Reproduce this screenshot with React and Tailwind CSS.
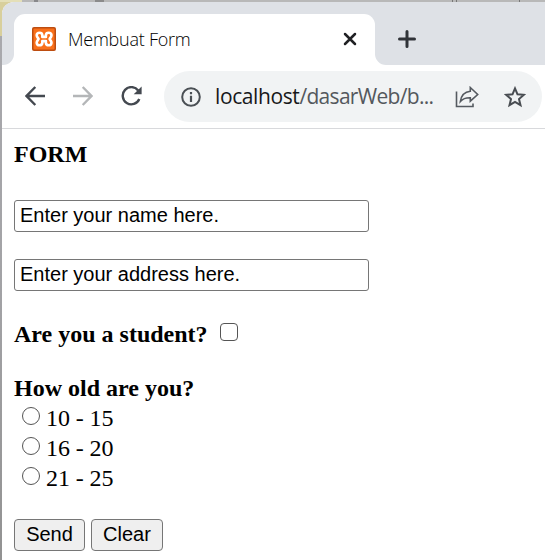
import React from "react";

function XamppLogo() {
  return (
    <svg width="24" height="24" viewBox="0 0 24 24" className="shrink-0">
      <rect width="24" height="24" rx="2" fill="#bd4d10" />
      <rect x="1.5" y="1.5" width="21" height="21" rx="1" fill="#f9701a" />
      <path
        d="M10.3 8C10 5 5 4.9 4.7 8.2C4.7 10 6 10.8 6.6 12C6 13.2 4.7 14 4.7 15.8C5 19.1 10 19 10.3 16V14.1H13.9V16C14.2 19 19.2 19.1 19.5 15.8C19.5 14 18.2 13.2 17.6 12C18.2 10.8 19.5 10 19.5 8.2C19.2 4.9 14.2 5 13.9 8V9.9H10.3Z"
        fill="#f9701a"
        stroke="#fff"
        strokeWidth="2.6"
        strokeLinejoin="round"
      />
    </svg>
  );
}

function TabStrip() {
  return (
    <div className="flex h-[63px] shrink-0 items-end bg-[#dee1e6]">
      <div className="h-[51px] w-3 bg-white">
        <div className="h-full w-full rounded-br-[11px] bg-[#dee1e6]" />
      </div>
      <div className="flex h-[51px] w-[361px] items-center rounded-t-[11px] bg-white pb-px pl-[18px] pr-[18px]">
        <XamppLogo />
        <span className="ml-[12px] flex-1 whitespace-nowrap font-['Open_Sans','Noto_Sans',sans-serif] text-[18px] font-light tracking-[-0.24px] text-black">
          Membuat Form
        </span>
        <svg width="14" height="14" viewBox="0 0 14 14" stroke="#202124" strokeWidth="2.5" strokeLinecap="round">
          <path d="M2 2L12 12M12 2L2 12" />
        </svg>
      </div>
      <div className="h-[51px] flex-1 bg-white">
        <div className="flex h-full w-full items-center rounded-bl-[11px] bg-[#dee1e6] pb-[2px] pl-[23px]">
          <svg width="18" height="18" viewBox="0 0 18 18" stroke="#303338" strokeWidth="3" strokeLinecap="round">
            <path d="M1.5 9H16.5M9 1.5V16.5" />
          </svg>
        </div>
      </div>
    </div>
  );
}

function Toolbar() {
  return (
    <div className="flex h-[64px] shrink-0 items-center border-b border-[#d8d9dc] bg-white pl-[23px] pr-[3px]">
      <svg className="relative -top-px" width="20" height="20" viewBox="0 0 20 20" fill="none" stroke="#444950" strokeWidth="2.4">
        <path d="M20 10H2M10.3 1L1.5 10L10.3 19" />
      </svg>
      <svg className="relative -top-px ml-7" width="20" height="20" viewBox="0 0 20 20" fill="none" stroke="#b4b6b8" strokeWidth="2.4">
        <path d="M0 10H18M9.7 1L18.5 10L9.7 19" />
      </svg>
      <svg className="relative -top-px ml-[28px]" width="21" height="20" viewBox="0 0 21 20" fill="none">
        <path d="M17.2 4.5A8.6 8.6 0 1 0 18.3 13" stroke="#444950" strokeWidth="2.4" />
        <path d="M20.6 .4V8.3H12.7Z" fill="#444950" />
      </svg>
      <div className="ml-[22px] flex h-[51px] flex-1 items-center rounded-full bg-[#f1f3f4] pl-[17px] pr-[16px]">
        <svg width="20" height="20" viewBox="0 0 20 20" fill="none" stroke="#4b5055" strokeWidth="2">
          <circle cx="10" cy="10" r="8.8" />
          <path d="M10 8.8V15M10 5V7.2" strokeWidth="2.2" />
        </svg>
        <span className="ml-[14px] w-[220px] whitespace-nowrap pt-px font-['Open_Sans','Noto_Sans',sans-serif] text-[21px] tracking-[-0.68px] text-[#54585d]">
          <span className="tracking-[-0.4px] text-[#17181a]">localhost</span>/dasarWeb/b...
        </span>
        <svg className="ml-[20px] shrink-0" width="24" height="22" viewBox="0 0 24 22" fill="none" stroke="#555a60" strokeWidth="1.6">
          <path d="M1.5 5.5V20.5H18V17.5" />
          <path d="M15.3 1.5L22.7 8.5L15.3 15.2V11.7C11 11.6 8 12.4 5.4 15.4C6.2 9.5 9.5 5.8 15.3 5.2Z" />
        </svg>
        <svg className="ml-auto shrink-0" width="22" height="22" viewBox="0 0 22 22" fill="none" stroke="#494d52" strokeWidth="2">
          <path d="M11 2.4L13.5 8.3L19.9 8.8L15 13L16.5 19.2L11 15.9L5.5 19.2L7 13L2.1 8.8L8.5 8.3Z" />
        </svg>
      </div>
    </div>
  );
}

const ages = ["10 - 15", "16 - 20", "21 - 25"];
const fieldClass =
  "block h-8 w-[355px] rounded-[3px] border border-[#767676] bg-white px-[5px] pb-[2px] font-['Liberation_Sans',Arial,sans-serif] text-[20px] text-black outline-none";
const buttonClass =
  "h-8 rounded-[4px] border border-[#767676] bg-[#efefef] pb-[2px] text-center font-['Liberation_Sans',Arial,sans-serif] text-[20px] leading-none text-black";

export default function App() {
  return (
    <div className="flex h-[560px] w-[545px] flex-col overflow-hidden bg-[#a2a2a5]">
      <div className="flex h-[2px] shrink-0 bg-[#b8b8b8]">
        <div className="w-[22px] bg-[#e4dfb8]" />
        <div className="ml-[12px] w-[4px] bg-[#88888b]" />
        <div className="ml-[57px] w-[9px] bg-[#8b8b8b]" />
        <div className="ml-[348px] w-px bg-[#777]" />
        <div className="ml-[3px] w-px bg-[#777]" />
        <div className="ml-[62px] w-px bg-[#777]" />
      </div>
      <div className="flex flex-1 bg-[linear-gradient(to_bottom,#d8cf9c_0px,#d8cf9c_34px,#a9a9ad_34px,#a2a2a5_300px,#929292_100%)]">
        <div className="ml-[2px] flex flex-1 flex-col overflow-hidden rounded-tl-[12px] bg-white">
          <TabStrip />
          <Toolbar />
          <form className="pl-[12px] pt-[10px] font-['Liberation_Serif','Times_New_Roman',serif] text-[24px] leading-[30px] text-black">
            <h1 className="font-bold">FORM</h1>
            <input className={`mt-[31px] ${fieldClass}`} defaultValue="Enter your name here." />
            <input className={`mt-[27px] ${fieldClass}`} defaultValue="Enter your address here." />
            <div className="mt-[28px] flex h-[30px] font-bold">
              <span>Are you a student?</span>
              <input
                type="checkbox"
                className="ml-[12px] mt-[4px] size-[18px] appearance-none rounded-[4px] border border-[#555] bg-white"
              />
            </div>
            <div className="mt-[24px] font-bold">How old are you?</div>
            {ages.map((age) => (
              <label key={age} className="flex h-[30px] pl-2">
                <input
                  type="radio"
                  name="age"
                  className="mt-[4px] size-[18px] appearance-none rounded-full border border-[#555] bg-white"
                />
                <span className="ml-[6px] tracking-[-0.1px]">{age}</span>
              </label>
            ))}
            <div className="mt-[26px] flex gap-[6px]">
              <button type="button" className={`w-[71px] ${buttonClass}`}>Send</button>
              <button type="button" className={`w-[72px] ${buttonClass}`}>Clear</button>
            </div>
          </form>
        </div>
      </div>
    </div>
  );
}
